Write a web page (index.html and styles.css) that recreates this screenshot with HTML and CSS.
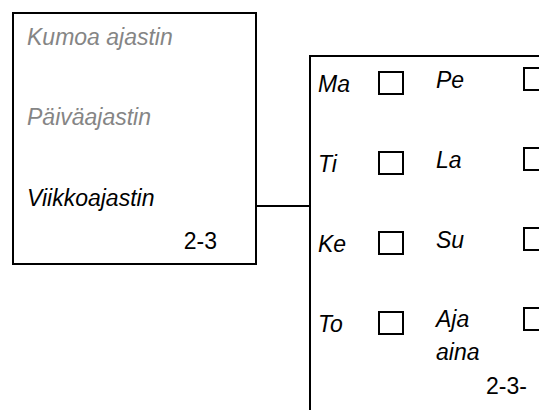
FILE: index.html
```html
<!DOCTYPE html>
<html lang="fi">
<head>
<meta charset="utf-8">
<title>Viikkoajastin</title>
<link rel="stylesheet" href="styles.css">
</head>
<body>
<div class="canvas">
  <div class="menu">
    <div class="item item-disabled item-first">Kumoa ajastin</div>
    <div class="item item-disabled item-second">Päiväajastin</div>
    <div class="item item-third">Viikkoajastin</div>
    <div class="page">2-3</div>
  </div>
  <div class="connector"></div>
  <div class="week">
    <div class="grid">
      <div class="day">Ma</div><div class="box"></div>
      <div class="day day-b">Pe</div><div class="box box-b"></div>

      <div class="day">Ti</div><div class="box"></div>
      <div class="day day-b">La</div><div class="box box-b"></div>

      <div class="day">Ke</div><div class="box"></div>
      <div class="day day-b">Su</div><div class="box box-b"></div>

      <div class="day">To</div><div class="box"></div>
      <div class="day day-b day-two">Aja<br>aina</div><div class="box box-b"></div>

      <div class="week-page">2-3-</div>
    </div>
  </div>
</div>
</body>
</html>
```
FILE: styles.css
```css
html, body {
  margin: 0;
  padding: 0;
  background: #fff;
  overflow: hidden;
}

body {
  width: 539px;
  height: 410px;
  font-family: "Liberation Sans", Arial, sans-serif;
  font-size: 23px;
  color: #000;
}

.canvas {
  display: flex;
  align-items: flex-start;
  padding: 12px 0 0 12px;
}

.menu {
  box-sizing: border-box;
  width: 245px;
  height: 253px;
  border: 2px solid #000;
  display: flex;
  flex-direction: column;
  padding: 10px 0 0 13px;
  flex: none;
}

.item {
  font-style: italic;
  line-height: 26px;
}

.item-disabled {
  color: #858585;
}

.item-second {
  margin-top: 54px;
}

.item-third {
  margin-top: 55px;
}

.page {
  line-height: 26px;
  align-self: flex-end;
  margin-top: 17px;
  margin-right: 38px;
}

.connector {
  flex: none;
  width: 52px;
  height: 2px;
  background: #000;
  margin-top: 193px;
}

.week {
  flex: none;
  box-sizing: border-box;
  width: 270px;
  height: 420px;
  margin-top: 43px;
  border: 2px solid #000;
  padding: 14px 0 0 7px;
}

.grid {
  display: grid;
  grid-template-columns: 60px 58px 87px 26px;
  grid-auto-rows: 80px;
  align-items: start;
}

.day {
  font-style: italic;
  line-height: 26px;
}

.day-b {
  margin-top: -4px;
}

.day-two {
  line-height: 33px;
  margin-top: -8px;
}

.box {
  box-sizing: border-box;
  width: 26px;
  height: 24px;
  border: 2px solid #000;
}

.box-b {
  margin-top: -4px;
}

.week-page {
  grid-column: 3 / 5;
  align-self: start;
  margin: -18px 0 0 50px;
  line-height: 26px;
}
```
